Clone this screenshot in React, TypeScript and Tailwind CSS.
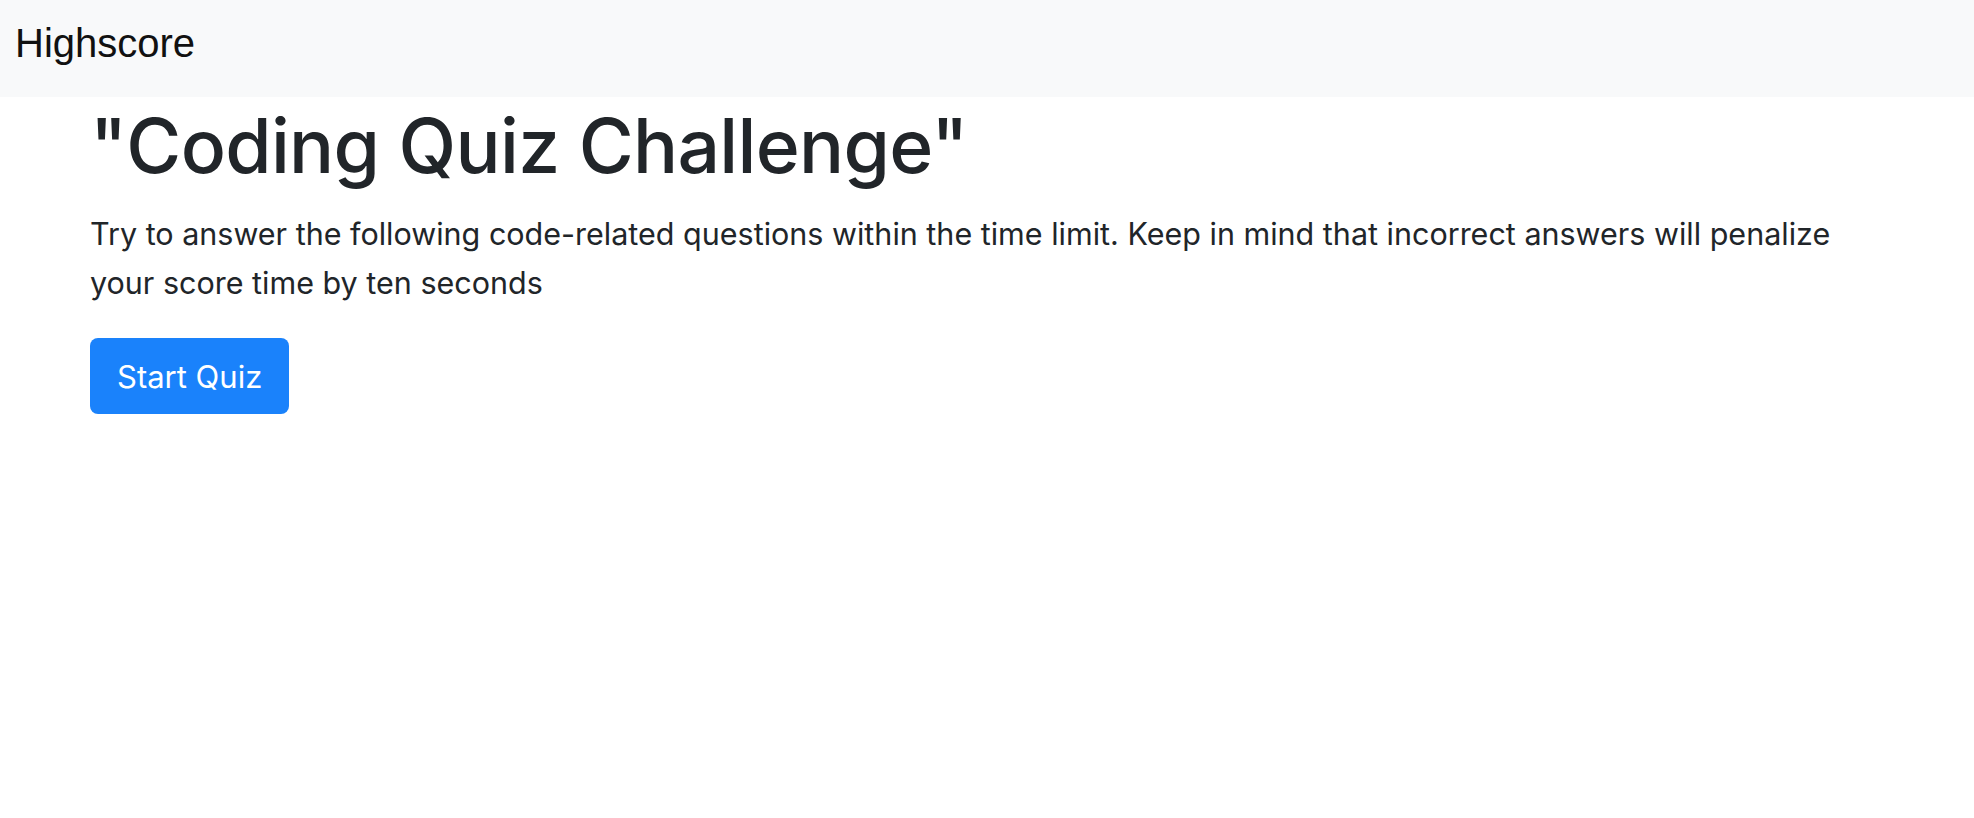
export default function App() {
  return (
    <div className="min-h-screen bg-white text-[#212529] font-['Inter','Liberation_Sans',sans-serif]">
      {/* Navbar */}
      <nav className="h-[97px] bg-[#f8f9fa] flex items-center px-[15px]">
        <a href="#" className="text-[40px] leading-none text-[#111] font-['Liberation_Sans',Arial,sans-serif] -mt-[12px]">
          Highscore
        </a>
      </nav>

      {/* Jumbotron */}
      <main className="px-[90px]">
        <h1 className="text-[75px] leading-[90px] font-medium tracking-[-0.7px] mt-[4px]">
          "Coding Quiz Challenge"
        </h1>
        <p className="text-[30.5px] leading-[49px] mt-[18px]">
          Try to answer the following code-related questions within the time limit. Keep in mind that incorrect answers will
          penalize your score time by ten seconds
        </p>
        <button className="mt-[31px] h-[76px] px-[27px] rounded-[8px] bg-[#1a82fb] text-white text-[31px] leading-none">
          Start Quiz
        </button>
      </main>
    </div>
  );
}
